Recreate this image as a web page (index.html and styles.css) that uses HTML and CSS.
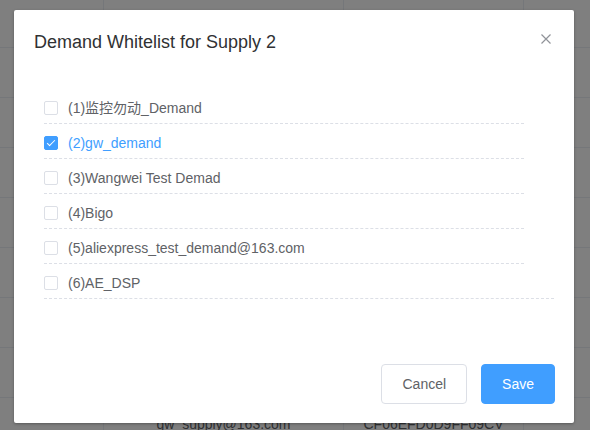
FILE: index.html
```html
<!DOCTYPE html>
<html>
<head>
<meta charset="utf-8">
<link rel="stylesheet" href="styles.css">
</head>
<body>
<div class="table">
  <div class="row first"><div class="cell c0"></div><div class="cell c1"></div><div class="cell c2"></div><div class="cell c3"></div></div>
  <div class="row"><div class="cell c0"></div><div class="cell c1"></div><div class="cell c2"></div><div class="cell c3"></div></div>
  <div class="row"><div class="cell c0"></div><div class="cell c1"></div><div class="cell c2"></div><div class="cell c3"></div></div>
  <div class="row"><div class="cell c0"></div><div class="cell c1"></div><div class="cell c2"></div><div class="cell c3"></div></div>
  <div class="row"><div class="cell c0"></div><div class="cell c1"></div><div class="cell c2"></div><div class="cell c3"></div></div>
  <div class="row"><div class="cell c0"></div><div class="cell c1"></div><div class="cell c2"></div><div class="cell c3"></div></div>
  <div class="row"><div class="cell c0"></div><div class="cell c1"></div><div class="cell c2"></div><div class="cell c3"></div></div>
  <div class="row"><div class="cell c0"></div><div class="cell c1"></div><div class="cell c2"></div><div class="cell c3"></div></div>
  <div class="row"><div class="cell c0"></div><div class="cell c1">gw_supply@163.com</div><div class="cell c2">CF06EFD0D9FF09CV</div><div class="cell c3"></div></div>
</div>
<div class="overlay"></div>
<div class="dialog">
  <div class="dialog-header">
    <span class="dialog-title">Demand Whitelist for Supply 2</span>
    <span class="dialog-close">
      <svg width="10" height="10" viewBox="0 0 10 10"><path d="M0.5 0.5 L9.5 9.5 M9.5 0.5 L0.5 9.5" stroke="#909399" stroke-width="1.2" fill="none"/></svg>
    </span>
  </div>
  <div class="dialog-body">
    <div class="item"><span class="box"></span><span class="label">(1)监控勿动_Demand</span></div>
    <div class="item checked"><span class="box"></span><span class="label">(2)gw_demand</span></div>
    <div class="item"><span class="box"></span><span class="label">(3)Wangwei Test Demad</span></div>
    <div class="item"><span class="box"></span><span class="label">(4)Bigo</span></div>
    <div class="item"><span class="box"></span><span class="label">(5)aliexpress_test_demand@163.com</span></div>
    <div class="item wide"><span class="box"></span><span class="label">(6)AE_DSP</span></div>
  </div>
  <div class="dialog-footer">
    <button class="btn btn-default">Cancel</button>
    <button class="btn btn-primary">Save</button>
  </div>
</div>
</body>
</html>
```
FILE: styles.css
```css
html, body {
  margin: 0;
  padding: 0;
  width: 590px;
  height: 430px;
  overflow: hidden;
  background: #fff;
  font-family: "Liberation Sans", Arial, "Noto Sans CJK SC", sans-serif;
}
.table {
  display: flex;
  flex-direction: column;
}
.row {
  display: grid;
  grid-template-columns: 104px 240px 180px 1fr;
  height: 50px;
  box-sizing: border-box;
  border-bottom: 1px solid #ebeef5;
}
.row.first {
  height: 48px;
}
.cell {
  box-sizing: border-box;
  display: flex;
  align-items: center;
  justify-content: center;
  font-size: 14px;
  color: #606266;
  padding-top: 2px;
}
.c0, .c1, .c2 {
  border-right: 1px solid #ebeef5;
}
.overlay {
  position: absolute;
  left: 0;
  top: 0;
  width: 590px;
  height: 430px;
  background: rgba(0, 0, 0, 0.5);
}
.dialog {
  position: absolute;
  left: 14px;
  top: 10px;
  width: 560px;
  height: 413px;
  box-sizing: border-box;
  background: #fff;
  border-radius: 2px;
  box-shadow: 0 1px 3px rgba(0, 0, 0, 0.3);
  display: flex;
  flex-direction: column;
}
.dialog-header {
  position: relative;
  padding: 20px 20px 10px;
}
.dialog-title {
  display: block;
  font-size: 18px;
  line-height: 24px;
  color: #303133;
}
.dialog-close {
  position: absolute;
  top: 24px;
  right: 23px;
  width: 10px;
  height: 10px;
  display: flex;
}
.dialog-body {
  padding: 25px 20px 0 30px;
  display: flex;
  flex-direction: column;
}
.item {
  width: 480px;
  box-sizing: border-box;
  padding: 12px 0 8px;
  border-bottom: 1px dashed #dcdfe6;
  display: flex;
  align-items: center;
  height: 35px;
}
.item.wide {
  width: 510px;
}
.box {
  width: 14px;
  height: 14px;
  box-sizing: border-box;
  border: 1px solid #dcdfe6;
  border-radius: 2px;
  background: #fff;
  position: relative;
  flex: none;
}
.item.checked .box {
  background: #409eff;
  border-color: #409eff;
}
.item.checked .box::after {
  content: "";
  position: absolute;
  left: 4px;
  top: 1px;
  width: 3px;
  height: 7px;
  border: 1px solid #fff;
  border-left: 0;
  border-top: 0;
  transform: rotate(45deg);
}
.label {
  padding-left: 10px;
  font-size: 14px;
  line-height: 14px;
  color: #606266;
  white-space: nowrap;
}
.item.checked .label {
  color: #409eff;
}
.dialog-footer {
  margin-top: auto;
  padding: 10px 19px 19px 20px;
  display: flex;
  justify-content: flex-end;
  gap: 14px;
}
.btn {
  height: 40px;
  padding: 0 20px;
  font-family: "Liberation Sans", Arial, sans-serif;
  font-size: 14px;
  border-radius: 4px;
  border: 1px solid #dcdfe6;
  box-sizing: border-box;
  cursor: pointer;
}
.btn-default {
  background: #fff;
  color: #606266;
}
.btn-primary {
  background: #409eff;
  border-color: #409eff;
  color: #fff;
}
```
